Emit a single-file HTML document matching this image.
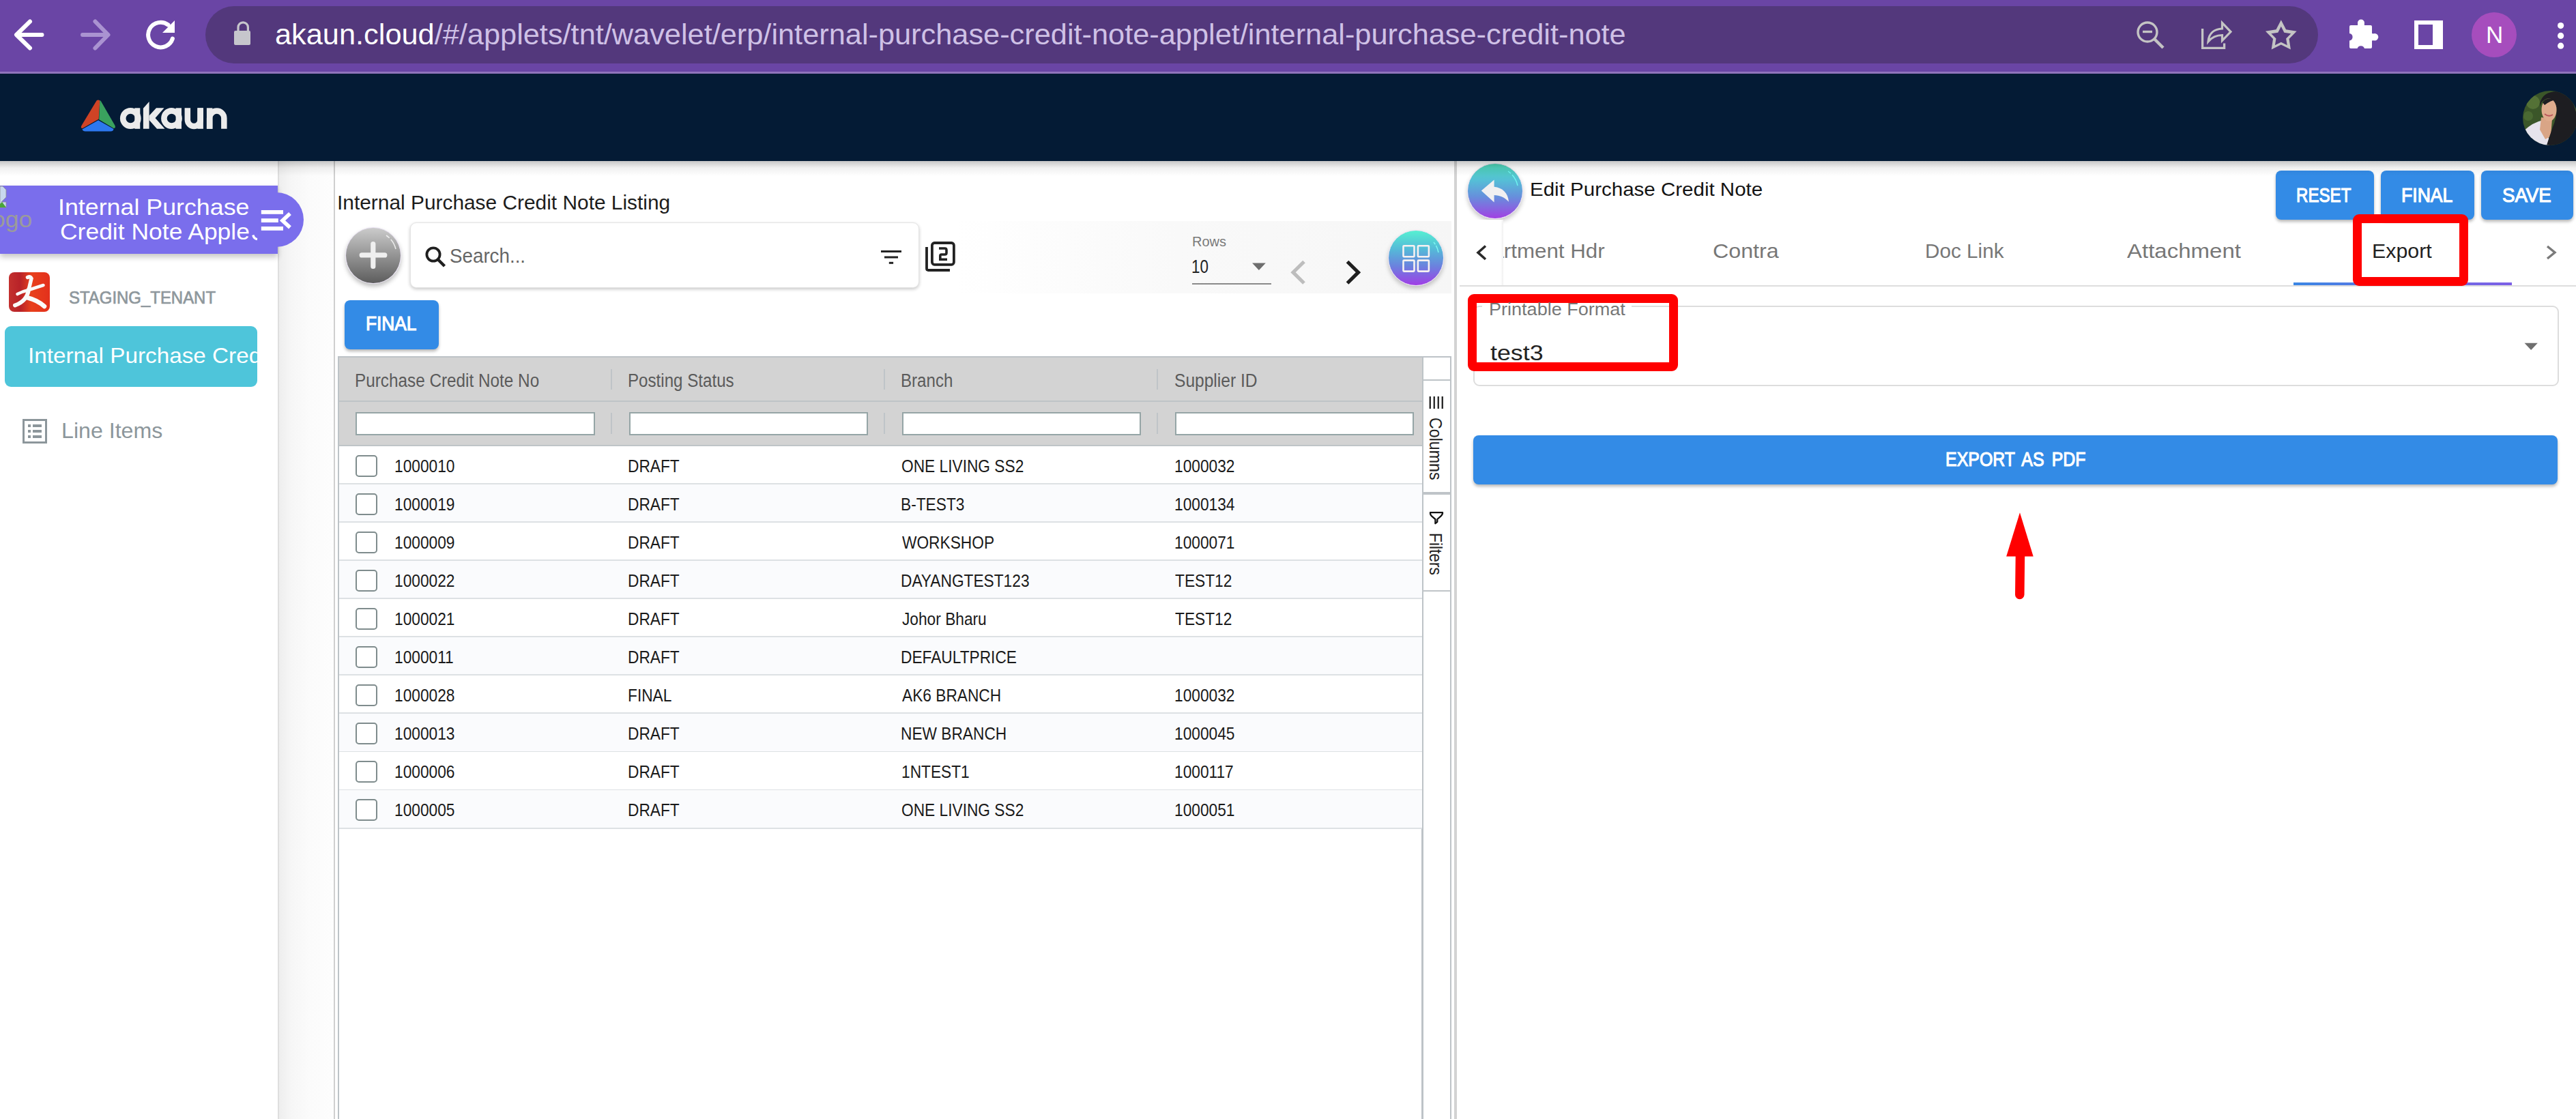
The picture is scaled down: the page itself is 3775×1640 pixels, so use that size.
<!DOCTYPE html>
<html><head><meta charset="utf-8">
<style>
html,body{margin:0;padding:0;}
body{width:3775px;height:1640px;overflow:hidden;position:relative;background:#fff;font-family:"Liberation Sans",sans-serif;}
.a{position:absolute;box-sizing:border-box;}
.t{position:absolute;white-space:nowrap;line-height:1;transform-origin:0 0;font-family:"Liberation Sans",sans-serif;}
svg{position:absolute;overflow:visible;}
</style></head>
<body>
<!-- ===== browser chrome ===== -->
<div class="a" style="left:0;top:0;width:3775px;height:105px;background:#6a45a5;"></div>
<div class="a" style="left:0;top:105px;width:3775px;height:3px;background:#9074bc;"></div>
<div class="a" style="left:301px;top:9px;width:3096px;height:84px;border-radius:42px;background:#53387c;"></div>

<!-- browser icons -->
<svg style="left:0;top:0" width="3775" height="105" viewBox="0 0 3775 105">
  <!-- back -->
  <g fill="none" stroke="#ffffff" stroke-width="6" stroke-linecap="round" stroke-linejoin="round">
    <path d="M61.5,51 H24.5 M44,31.5 L24,51 L44,70.5"/>
  </g>
  <!-- forward -->
  <g fill="none" stroke="#aa93d1" stroke-width="6" stroke-linecap="round" stroke-linejoin="round">
    <path d="M121,51 H157.5 M139.5,31.5 L158.5,51 L139.5,70.5"/>
  </g>
  <!-- reload -->
  <g fill="none" stroke="#ffffff" stroke-width="6" stroke-linecap="round">
    <path d="M252.9,56.5 A18.3,18.3 0 1 1 246.5,36.5"/>
  </g>
  <path d="M256,30 V48 H238 Z" fill="#ffffff"/>
  <!-- lock -->
  <path d="M349,45 V40 A7.2,7.2 0 0 1 363.4,40 V45" fill="none" stroke="#c6c6cc" stroke-width="3.2"/>
  <rect x="343" y="45" width="24" height="21" rx="2" fill="#c6c6cc"/>
  <!-- zoom out -->
  <circle cx="3147" cy="47" r="14" fill="none" stroke="#c4c4c4" stroke-width="3.4"/>
  <path d="M3140,46.5 H3154" stroke="#c4c4c4" stroke-width="3.4"/>
  <path d="M3157,57 L3170,70" stroke="#c4c4c4" stroke-width="4.4"/>
  <!-- share -->
  <path d="M3227.6,42 V70.4 H3259.6 V63.4" fill="none" stroke="#c4c4c4" stroke-width="3.3"/>
  <path d="M3236,61 C3237,48 3246,42.5 3256.5,42 V33.5 L3269,46.6 L3256.5,59.5 V51.5 C3248,51.5 3241,55 3236,61 Z" fill="none" stroke="#c4c4c4" stroke-width="3.2" stroke-linejoin="miter"/>
  <!-- star -->
  <path d="M3342.80,29.20 L3350.09,43.17 L3365.63,45.78 L3354.59,57.03 L3356.91,72.62 L3342.80,65.60 L3328.69,72.62 L3331.01,57.03 L3319.97,45.78 L3335.51,43.17 Z M3342.80,38.80 L3347.33,47.77 L3357.26,49.30 L3350.12,56.38 L3351.73,66.30 L3342.80,61.70 L3333.87,66.30 L3335.48,56.38 L3328.34,49.30 L3338.27,47.77 Z" fill="#c4c4c4" fill-rule="evenodd"/>
  <!-- puzzle -->
  <path d="M3448,37 H3455 A5,5 0 0 1 3465,37 H3474 A2,2 0 0 1 3476,39 V49 A5.3,5.3 0 0 1 3476,59.6 V69 A2,2 0 0 1 3474,71 H3465 A5.5,5.5 0 0 0 3454.5,71 H3445 A2,2 0 0 1 3443,69 V59.5 A5.3,5.3 0 0 0 3443,49 V39 A2,2 0 0 1 3445,37 Z" fill="#ffffff"/>
  <circle cx="3460" cy="33.5" r="5" fill="#ffffff"/>
  <circle cx="3480" cy="54.3" r="5.3" fill="#ffffff"/>
  <!-- sidebar toggle -->
  <path d="M3538,30 H3580 V72 H3538 Z M3544,36 V66 H3565 V36 Z" fill="#ffffff" fill-rule="evenodd"/>
  <!-- profile N -->
  <circle cx="3655" cy="51" r="33" fill="#a64dbd"/>
  <!-- menu dots -->
  <circle cx="3752.6" cy="37.6" r="4.6" fill="#fff"/>
  <circle cx="3752.6" cy="52.4" r="4.6" fill="#fff"/>
  <circle cx="3752.6" cy="67.2" r="4.6" fill="#fff"/>
</svg>

<!-- ===== navy app header ===== -->
<div class="a" style="left:0;top:108px;width:3775px;height:128px;background:#041b35;"></div>
<svg style="left:0;top:108px" width="3775" height="128" viewBox="0 108 3775 128">
  <!-- akaun logo triangle -->
  <path d="M141.5,147.5 Q143.9,145.5 146.3,147.5 L144.7,174.6 L121,188 Q117.5,188 119.5,184 Z" fill="#cf4325"/>
  <path d="M146.3,147.5 Q146.8,146.8 148,148.6 L168.5,184 Q170,188 166.5,188 L145.2,175.2 Z" fill="#3aa15e"/>
  <path d="M144,176.3 L166.5,189 Q166,192.5 162,192.5 H125 Q121.5,192.5 120.5,189.5 Z" fill="#2d78ef"/>
  <!-- akaun letters -->
  <g fill="#ebebeb">
    <circle cx="191.3" cy="173.5" r="11.1" fill="none" stroke="#ebebeb" stroke-width="8.6"/>
    <rect x="197.3" y="158.3" width="8" height="30.5"/>
    <path d="M209.9,158.7 L218.6,149.1 V188.8 H209.9 Z"/>
    <path d="M218.6,169.5 L229,158.3 H240.5 L227.5,173 L241.5,188.8 H230 L218.6,176 Z"/>
    <circle cx="251.5" cy="173.5" r="11.1" fill="none" stroke="#ebebeb" stroke-width="8.6"/>
    <rect x="257.6" y="158.3" width="8.4" height="30.5"/>
    <path d="M274.85,158.3 V175.5 A9.4,9.4 0 0 0 293.65,175.5 V158.3" fill="none" stroke="#ebebeb" stroke-width="8.5"/>
    <rect x="289.4" y="158.3" width="8.5" height="30.5"/>
    <rect x="302.9" y="158.3" width="8.5" height="30.5"/>
    <path d="M307.15,188.8 V173.2 A10.6,10.6 0 0 1 328.35,173.2 V188.8" fill="none" stroke="#ebebeb" stroke-width="8.5"/>
  </g>
  <!-- avatar -->
  <defs>
    <clipPath id="avc"><circle cx="3737" cy="173" r="40"/></clipPath>
    <radialGradient id="avbg" cx="0.3" cy="0.3" r="0.9">
      <stop offset="0" stop-color="#4f6a2e"/><stop offset="0.6" stop-color="#2a3a1c"/><stop offset="1" stop-color="#1a2414"/>
    </radialGradient>
  </defs>
  <g clip-path="url(#avc)">
    <rect x="3690" y="128" width="90" height="90" fill="#3b5629"/>
    <circle cx="3712" cy="150" r="10" fill="#5f7d3c" opacity="0.7"/>
    <circle cx="3705" cy="170" r="7" fill="#4f6e34" opacity="0.8"/>
    <circle cx="3768" cy="160" r="8" fill="#5a7a3a" opacity="0.6"/>
    <path d="M3698,192 Q3712,179 3727,176 L3734,196 L3737,215 L3698,215 Z" fill="#e6e3ec"/>
    <path d="M3724,172 L3740,174 L3738,200 L3730,204 L3722,190 Z" fill="#d9a586"/>
    <path d="M3722,152 Q3726,133 3750,134 Q3772,140 3776,170 L3777,216 L3731,216 Q3736,200 3741,186 Q3747,172 3746.5,158 Q3744,146 3733,144 Q3724,147 3722,156 Z" fill="#1d1d21"/>
    <ellipse cx="3735.5" cy="161" rx="11" ry="16.5" fill="#dfab8d"/>
    <path d="M3726,150 Q3732,141 3746,146 Q3738,147 3729,154 Z" fill="#1d1d21"/>
    <path d="M3729,167 Q3735,172 3741,168" fill="none" stroke="#b9565a" stroke-width="1.8"/>
  </g>
</svg>

<!-- ===== panels ===== -->
<div class="a" style="left:407px;top:236px;width:2px;height:1404px;background:#dedede;"></div>
<div class="a" style="left:409px;top:236px;width:80px;height:1404px;background:linear-gradient(to right,#eeeeee,#f6f6f6 22%,#fbfbfb 55%,#fdfdfd);"></div>
<div class="a" style="left:489px;top:236px;width:2px;height:1404px;background:#cfcfcf;"></div>
<div class="a" style="left:2131px;top:236px;width:4px;height:1404px;background:#d3d3d3;"></div>

<!-- ===== sidebar ===== -->
<div class="a" style="left:0;top:272px;width:407px;height:100px;background:#7a6eec;box-shadow:0 5px 8px rgba(0,0,0,0.22);"></div>
<div class="a" style="left:365px;top:282px;width:80px;height:80px;border-radius:40px;background:#7a6eec;"></div>
<div class="a" style="left:0;top:272px;width:407px;height:100px;background:#7a6eec;"></div>
<svg style="left:0;top:260px" width="460" height="120" viewBox="0 260 460 120">
  <!-- broken image icon -->
  <path d="M0,273 H4 L9,278 V289 L2,296 L9,296 V304 H0 Z" fill="#c9d8ee" stroke="#8e8e8e" stroke-width="0.8"/>
  <path d="M0,299 L3,296 L9,304 H0 Z" fill="#4aa53a"/>
  <path d="M370.8,344.5 Q372.3,350 377,350.6" fill="none" stroke="#fff" stroke-width="3.4"/>
  <!-- hamburger -->
  <g fill="#ffffff">
    <rect x="382.8" y="308" width="32.2" height="5.8"/>
    <rect x="382.8" y="320.2" width="25" height="5.8"/>
    <rect x="382.8" y="332" width="32.2" height="5.8"/>
  </g>
  <path d="M425,313 L414,323.2 L425,333.4" fill="none" stroke="#ffffff" stroke-width="5.6"/>
</svg>
<!-- tenant logo -->
<div class="a" style="left:13px;top:399px;width:60px;height:57.5px;border-radius:8px;background:linear-gradient(to right,#c3302e,#b82228 28%,#e8401c 55%,#e3301c);"></div>
<svg style="left:13px;top:399px" width="60" height="58" viewBox="13 399 60 58">
  <g fill="none" stroke="#fafafa" stroke-linecap="round">
    <path d="M40.5,406.5 Q44.5,404.5 46,408 L42.5,423" stroke-width="5.5"/>
    <path d="M25.5,431 Q33,427 42,425 Q54,421 63.5,418" stroke-width="4.6"/>
    <path d="M42,424 Q40,441 22,447.5" stroke-width="6"/>
    <path d="M41,436.5 Q55,440 65,449" stroke-width="6.5"/>
  </g>
</svg>
<!-- sidebar active item -->
<div class="a" style="left:7px;top:477.5px;width:370px;height:89px;border-radius:9px;background:#4ec5da;"></div>
<!-- line items icon -->
<svg style="left:30px;top:610px" width="45" height="45" viewBox="30 610 45 45">
  <rect x="34.5" y="615.5" width="33" height="33" fill="none" stroke="#8c969b" stroke-width="3"/>
  <g fill="#8c969b">
    <rect x="41" y="622" width="4" height="4"/><rect x="48" y="622" width="13" height="4"/>
    <rect x="41" y="630" width="4" height="4"/><rect x="48" y="630" width="13" height="4"/>
    <rect x="41" y="638" width="4" height="4"/><rect x="48" y="638" width="13" height="4"/>
  </g>
</svg>

<!-- ===== listing panel ===== -->
<!-- pagination band -->
<div class="a" style="left:1400px;top:324px;width:727px;height:106px;background:linear-gradient(to right,rgba(248,248,248,0),#f9f9f9 45%,#f6f6f6);"></div>
<!-- add button -->
<div class="a" style="left:506px;top:332.5px;width:82px;height:83px;border-radius:50%;background:linear-gradient(to bottom,#cbcbcb,#5d5d5d);border:1.6px solid #e9e2f2;box-shadow:0 4px 6px rgba(0,0,0,0.25);"></div>
<svg style="left:500px;top:325px" width="100" height="100" viewBox="500 325 100 100">
  <path d="M546.8,357.5 V390.5 M530.2,373.9 H563.8" stroke="#efefef" stroke-width="7.2" stroke-linecap="round"/>
  <path d="M566,345 A33,33 0 0 1 580,365" fill="none" stroke="rgba(255,255,255,0.75)" stroke-width="1.6" stroke-dasharray="6 3 40"/>
</svg>
<!-- search box -->
<div class="a" style="left:601px;top:326px;width:746px;height:96px;border-radius:9px;background:#fff;border:1px solid #e4e4e4;box-shadow:0 2px 5px rgba(0,0,0,0.22);"></div>
<svg style="left:600px;top:325px" width="820" height="100" viewBox="600 325 820 100">
  <circle cx="635" cy="373" r="9.6" fill="none" stroke="#1f1f1f" stroke-width="3.8"/>
  <path d="M641.5,380 L651.5,390" stroke="#1f1f1f" stroke-width="4.4"/>
  <g fill="#222">
    <rect x="1291" y="367" width="30" height="3"/>
    <rect x="1296" y="375.5" width="20" height="3"/>
    <rect x="1302.8" y="383.8" width="6.3" height="3"/>
  </g>
  <!-- library icon -->
  <rect x="1365.9" y="356" width="32" height="31.8" rx="3.5" fill="none" stroke="#222" stroke-width="3.8"/>
  <path d="M1358,362 V393.5 Q1358,396 1360.5,396 H1392" fill="none" stroke="#222" stroke-width="3.8"/>
  <path d="M1376,364 H1384.5 Q1387,364 1387,366.5 V370.5 Q1387,373 1384.5,373 H1379.5 Q1377.8,373 1377.8,375 V380.2 H1388" fill="none" stroke="#222" stroke-width="3.6"/>
</svg>
<!-- rows selector -->
<div class="a" style="left:1747px;top:415px;width:116px;height:2px;background:#8a8a8a;"></div>
<svg style="left:1820px;top:370px" width="320" height="60" viewBox="1820 370 320 60">
  <path d="M1835,385.4 H1854.8 L1844.9,396 Z" fill="#6e6e6e"/>
  <path d="M1911,383.5 L1895,399.2 L1911,415" fill="none" stroke="#bdbdbd" stroke-width="5.2"/>
  <path d="M1974.5,383.5 L1990.5,399.2 L1974.5,415" fill="none" stroke="#1f1f1f" stroke-width="5.2"/>
</svg>
<!-- grid button -->
<div class="a" style="left:2034px;top:337px;width:82px;height:82px;border-radius:50%;background:linear-gradient(to bottom,#56f0d2,#55b8d8 35%,#6b82de 65%,#a03ee6);border:1.6px solid #ece3f3;box-shadow:0 4px 6px rgba(0,0,0,0.22);"></div>
<svg style="left:2030px;top:330px" width="95" height="95" viewBox="2030 330 95 95">
  <g fill="none" stroke="#f6f1f1" stroke-width="2.6">
    <rect x="2056.5" y="360.3" width="16" height="16" rx="1"/>
    <rect x="2077.9" y="360.3" width="16" height="16" rx="1"/>
    <rect x="2056.5" y="381.6" width="16" height="16" rx="1"/>
    <rect x="2077.9" y="381.6" width="16" height="16" rx="1"/>
  </g>
  <path d="M2101,355 A33,33 0 0 1 2108,370" fill="none" stroke="#7ff5f0" stroke-width="1.5" stroke-dasharray="4 2 30"/>
</svg>
<!-- FINAL button -->
<div class="a" style="left:505px;top:440px;width:138px;height:72px;border-radius:8px;background:#338be6;box-shadow:0 3px 4px rgba(0,0,0,0.28);"></div>

<!-- ===== table ===== -->
<div class="a" style="left:495px;top:522px;width:1590px;height:1118px;border-left:2px solid #bdc3c7;border-top:2px solid #bdc3c7;border-right:2px solid #bdc3c7;"></div>
<div class="a" style="left:497px;top:524px;width:1587px;height:128.5px;background:#d3d3d3;"></div>
<div class="a" style="left:497px;top:587px;width:1587px;height:2px;background:#bfc4c7;"></div>
<div class="a" style="left:497px;top:651.5px;width:1587px;height:2px;background:#bfc4c7;"></div>
<div class="a" style="left:497px;top:653.50px;width:1587px;height:56.07px;background:#ffffff;"></div>
<div class="a" style="left:497px;top:708.07px;width:1587px;height:2px;background:#dde1e4;"></div>
<div class="a" style="left:521px;top:666.50px;width:32px;height:32px;border:2px solid #7f8c8d;border-radius:5px;background:#fff;"></div>
<div class="a" style="left:497px;top:709.57px;width:1587px;height:56.07px;background:#fafbfd;"></div>
<div class="a" style="left:497px;top:764.14px;width:1587px;height:2px;background:#dde1e4;"></div>
<div class="a" style="left:521px;top:722.57px;width:32px;height:32px;border:2px solid #7f8c8d;border-radius:5px;background:#fff;"></div>
<div class="a" style="left:497px;top:765.64px;width:1587px;height:56.07px;background:#ffffff;"></div>
<div class="a" style="left:497px;top:820.21px;width:1587px;height:2px;background:#dde1e4;"></div>
<div class="a" style="left:521px;top:778.64px;width:32px;height:32px;border:2px solid #7f8c8d;border-radius:5px;background:#fff;"></div>
<div class="a" style="left:497px;top:821.71px;width:1587px;height:56.07px;background:#fafbfd;"></div>
<div class="a" style="left:497px;top:876.28px;width:1587px;height:2px;background:#dde1e4;"></div>
<div class="a" style="left:521px;top:834.71px;width:32px;height:32px;border:2px solid #7f8c8d;border-radius:5px;background:#fff;"></div>
<div class="a" style="left:497px;top:877.78px;width:1587px;height:56.07px;background:#ffffff;"></div>
<div class="a" style="left:497px;top:932.35px;width:1587px;height:2px;background:#dde1e4;"></div>
<div class="a" style="left:521px;top:890.78px;width:32px;height:32px;border:2px solid #7f8c8d;border-radius:5px;background:#fff;"></div>
<div class="a" style="left:497px;top:933.85px;width:1587px;height:56.07px;background:#fafbfd;"></div>
<div class="a" style="left:497px;top:988.42px;width:1587px;height:2px;background:#dde1e4;"></div>
<div class="a" style="left:521px;top:946.85px;width:32px;height:32px;border:2px solid #7f8c8d;border-radius:5px;background:#fff;"></div>
<div class="a" style="left:497px;top:989.92px;width:1587px;height:56.07px;background:#ffffff;"></div>
<div class="a" style="left:497px;top:1044.49px;width:1587px;height:2px;background:#dde1e4;"></div>
<div class="a" style="left:521px;top:1002.92px;width:32px;height:32px;border:2px solid #7f8c8d;border-radius:5px;background:#fff;"></div>
<div class="a" style="left:497px;top:1045.99px;width:1587px;height:56.07px;background:#fafbfd;"></div>
<div class="a" style="left:497px;top:1100.56px;width:1587px;height:2px;background:#dde1e4;"></div>
<div class="a" style="left:521px;top:1058.99px;width:32px;height:32px;border:2px solid #7f8c8d;border-radius:5px;background:#fff;"></div>
<div class="a" style="left:497px;top:1102.06px;width:1587px;height:56.07px;background:#ffffff;"></div>
<div class="a" style="left:497px;top:1156.63px;width:1587px;height:2px;background:#dde1e4;"></div>
<div class="a" style="left:521px;top:1115.06px;width:32px;height:32px;border:2px solid #7f8c8d;border-radius:5px;background:#fff;"></div>
<div class="a" style="left:497px;top:1158.13px;width:1587px;height:56.07px;background:#fafbfd;"></div>
<div class="a" style="left:497px;top:1212.70px;width:1587px;height:2px;background:#dde1e4;"></div>
<div class="a" style="left:521px;top:1171.13px;width:32px;height:32px;border:2px solid #7f8c8d;border-radius:5px;background:#fff;"></div>
<div class="a" style="left:894.8px;top:541px;width:2px;height:30px;background:#bfc4c8;"></div>
<div class="a" style="left:894.8px;top:604.5px;width:2px;height:31px;background:#bfc4c8;"></div>
<div class="a" style="left:1294.5px;top:541px;width:2px;height:30px;background:#bfc4c8;"></div>
<div class="a" style="left:1294.5px;top:604.5px;width:2px;height:31px;background:#bfc4c8;"></div>
<div class="a" style="left:1694.6px;top:541px;width:2px;height:30px;background:#bfc4c8;"></div>
<div class="a" style="left:1694.6px;top:604.5px;width:2px;height:31px;background:#bfc4c8;"></div>
<div class="a" style="left:521.4px;top:604px;width:350.9px;height:34px;border:2px solid #95a5a6;background:#fff;"></div>
<div class="a" style="left:921.5px;top:604px;width:350.9px;height:34px;border:2px solid #95a5a6;background:#fff;"></div>
<div class="a" style="left:1321.5px;top:604px;width:350.8px;height:34px;border:2px solid #95a5a6;background:#fff;"></div>
<div class="a" style="left:1721.7px;top:604px;width:350.5px;height:34px;border:2px solid #95a5a6;background:#fff;"></div>
<!-- tool panel -->
<div class="a" style="left:2084px;top:522px;width:43px;height:1118px;background:#fff;border-top:2px solid #bdc3c7;border-right:2px solid #bdc3c7;border-left:2px solid #bdc3c7;"></div>
<div class="a" style="left:2084px;top:556px;width:43px;height:2px;background:#bdc3c7;"></div>
<div class="a" style="left:2084px;top:721px;width:43px;height:3.5px;background:#bfc4c8;"></div>
<div class="a" style="left:2084px;top:865px;width:43px;height:2px;background:#bfc4c8;"></div>
<svg style="left:2084px;top:570px" width="43" height="210" viewBox="2084 570 43 210">
  <g fill="#222">
    <rect x="2094.6" y="581" width="2.3" height="18"/>
    <rect x="2100.6" y="581" width="2.3" height="18"/>
    <rect x="2106.6" y="581" width="2.3" height="18"/>
    <rect x="2112.6" y="581" width="2.3" height="18"/>
  </g>
  <path d="M2096,751.2 H2114 V752.6 Q2113.6,754.6 2111.6,756.4 L2106.3,761 V764.8 L2103.4,767.2 V761 L2098,756.4 Q2096,754.6 2096,752.6 Z" fill="none" stroke="#111" stroke-width="2.3" stroke-linejoin="round"/>
</svg>

<!-- ===== right panel ===== -->
<div class="a" style="left:2150px;top:239px;width:82px;height:82px;border-radius:50%;background:linear-gradient(to bottom,#4dd6b5,#55bfd6 30%,#6690dc 60%,#a141e3);border:1.6px solid #ece3f3;box-shadow:0 4px 6px rgba(0,0,0,0.22);"></div>
<svg style="left:2140px;top:230px" width="100" height="100" viewBox="2140 230 100 100">
  <path d="M2170.8,279.6 L2189.6,263.5 L2189.6,273.8 C2202,275 2210,283 2211,295.7 C2205,289 2198,286 2189.6,285.9 L2189.6,296.6 Z" fill="#f1f0f1"/>
  <path d="M2210,251 A34,34 0 0 1 2224,272" fill="none" stroke="#6ff4ef" stroke-width="1.5" stroke-dasharray="5 3 40"/>
</svg>
<!-- action buttons -->
<div class="a" style="left:3335px;top:250px;width:144px;height:72px;border-radius:8px;background:#338be6;box-shadow:0 3px 4px rgba(0,0,0,0.28);"></div>
<div class="a" style="left:3489px;top:250px;width:137px;height:72px;border-radius:8px;background:#338be6;box-shadow:0 3px 4px rgba(0,0,0,0.28);"></div>
<div class="a" style="left:3636px;top:250px;width:135px;height:72px;border-radius:8px;background:#338be6;box-shadow:0 3px 4px rgba(0,0,0,0.28);"></div>
<!-- tabs -->
<div class="a" style="left:2139px;top:418px;width:3636px;height:2px;background:#dedede;"></div>
<div class="a" style="left:3360.6px;top:413.6px;width:320px;height:4.4px;background:linear-gradient(to right,#3a86e4,#6b6fe4 60%,#7c5fe6);"></div>
<div class="a" style="left:2135px;top:322px;width:68px;height:96px;background:linear-gradient(to right,#fff 94%,#f0f0f0);"></div>
<svg style="left:2135px;top:340px" width="1640" height="60" viewBox="2135 340 1640 60">
  <path d="M2177,360.5 L2166,370.2 L2177,380" fill="none" stroke="#2a2a2a" stroke-width="3.6"/>
  <path d="M3733,361 L3744,370 L3733,379" fill="none" stroke="#7a7a7a" stroke-width="3.4"/>
</svg>
<!-- printable format field -->
<div class="a" style="left:2159px;top:448px;width:1591px;height:118px;border:2px solid #dddddd;border-radius:9px;"></div>
<div class="a" style="left:2172px;top:440px;width:219px;height:14px;background:#fff;"></div>
<svg style="left:3690px;top:495px" width="40" height="25" viewBox="3690 495 40 25">
  <path d="M3699.5,502.8 H3718.8 L3709.15,513 Z" fill="#6f6f6f"/>
</svg>
<!-- export as pdf -->
<div class="a" style="left:2159px;top:638px;width:1589px;height:72px;border-radius:8px;background:#338be6;box-shadow:0 3px 4px rgba(0,0,0,0.28);"></div>
<!-- red arrow -->
<svg style="left:2930px;top:745px" width="60" height="140" viewBox="2930 745 60 140">
  <path d="M2960,751.2 L2979.7,815.5 L2940.2,815.5 Z" fill="#ff0000"/>
  <path d="M2960.5,812 L2959.8,871.5" stroke="#ff0000" stroke-width="13.5" stroke-linecap="round"/>
</svg>
<!-- red highlight boxes -->
<div class="a" style="left:3448px;top:313.5px;width:169px;height:105px;border:13px solid #ff0000;border-radius:9px;"></div>
<div class="a" style="left:2151px;top:431px;width:308px;height:113px;border:13.3px solid #ff0000;border-radius:9px;"></div>

<!-- header shadow -->
<div class="a" style="left:0;top:236px;width:3775px;height:22px;background:linear-gradient(to bottom,rgba(0,0,0,0.22),rgba(0,0,0,0.06) 45%,rgba(0,0,0,0));"></div>

<div class="t" style="left:403.29px;top:29.40px;font-size:43.00px;color:#cfc1e6;transform:scaleX(1.0076);"><span style="color:#ffffff">akaun.cloud</span>/#/applets/tnt/wavelet/erp/internal-purchase-credit-note-applet/internal-purchase-credit-note</div>
<div class="t" style="left:3642.63px;top:33.65px;font-size:35.50px;color:#ffffff;transform:scaleX(0.9857);">N</div>
<div class="t" style="left:-19.62px;top:304.87px;font-size:33.00px;color:#9b9b9b;transform:scaleX(1.0800);">logo</div>
<div class="t" style="left:85.37px;top:287.22px;font-size:33.28px;color:#ffffff;transform:scaleX(1.0757);">Internal Purchase</div>
<div class="t" style="left:87.53px;top:322.92px;font-size:33.28px;color:#ffffff;transform:scaleX(1.0660);">Credit Note Apple</div>
<div class="t" style="left:100.94px;top:423.94px;font-size:25.00px;color:#8e979c;-webkit-text-stroke:0.7px #8e979c;transform:scaleX(0.9575);">STAGING_TENANT</div>
<div style="position:absolute;overflow:hidden;left:0.00px;top:471.70px;width:377.00px;height:80px;"><div class="t" style="left:40.92px;top:32.93px;font-size:31.98px;color:#ffffff;transform:scaleX(1.0408);">Internal Purchase Credit</div></div>
<div class="t" style="left:89.69px;top:614.93px;font-size:31.98px;color:#8c969b;transform:scaleX(1.0056);">Line Items</div>
<div class="t" style="left:493.74px;top:283.39px;font-size:29.07px;color:#1c1c1c;transform:scaleX(1.0280);">Internal Purchase Credit Note Listing</div>
<div class="t" style="left:659.07px;top:359.78px;font-size:29.80px;color:#666666;transform:scaleX(0.9313);">Search...</div>
<div class="t" style="left:535.69px;top:460.39px;font-size:29.07px;color:#ffffff;-webkit-text-stroke:1.2px #fff;transform:scaleX(0.9040);">FINAL</div>
<div class="t" style="left:1746.62px;top:344.07px;font-size:20.35px;color:#7a7a7a;transform:scaleX(0.9819);">Rows</div>
<div class="t" style="left:1745.98px;top:376.62px;font-size:27.62px;color:#222222;transform:scaleX(0.8111);">10</div>
<div class="t" style="left:519.94px;top:543.62px;font-size:27.62px;color:#5b5b5b;transform:scaleX(0.8803);">Purchase Credit Note No</div>
<div class="t" style="left:920.05px;top:543.62px;font-size:27.62px;color:#5b5b5b;transform:scaleX(0.8743);">Posting Status</div>
<div class="t" style="left:1319.95px;top:543.62px;font-size:27.62px;color:#5b5b5b;transform:scaleX(0.8737);">Branch</div>
<div class="t" style="left:1720.81px;top:543.62px;font-size:27.62px;color:#5b5b5b;transform:scaleX(0.8898);">Supplier ID</div>
<div class="t" style="left:578.00px;top:670.69px;font-size:25.29px;color:#1a1a1a;transform:scaleX(0.8985);">1000010</div>
<div class="t" style="left:920.00px;top:670.69px;font-size:25.29px;color:#1a1a1a;transform:scaleX(0.8985);">DRAFT</div>
<div class="t" style="left:1320.80px;top:670.69px;font-size:25.29px;color:#1a1a1a;transform:scaleX(0.8985);">ONE LIVING SS2</div>
<div class="t" style="left:1720.80px;top:670.69px;font-size:25.29px;color:#1a1a1a;transform:scaleX(0.8985);">1000032</div>
<div class="t" style="left:578.00px;top:726.76px;font-size:25.29px;color:#1a1a1a;transform:scaleX(0.8985);">1000019</div>
<div class="t" style="left:920.00px;top:726.76px;font-size:25.29px;color:#1a1a1a;transform:scaleX(0.8985);">DRAFT</div>
<div class="t" style="left:1319.90px;top:726.76px;font-size:25.29px;color:#1a1a1a;transform:scaleX(0.8985);">B-TEST3</div>
<div class="t" style="left:1720.80px;top:726.76px;font-size:25.29px;color:#1a1a1a;transform:scaleX(0.8985);">1000134</div>
<div class="t" style="left:578.00px;top:782.83px;font-size:25.29px;color:#1a1a1a;transform:scaleX(0.8985);">1000009</div>
<div class="t" style="left:920.00px;top:782.83px;font-size:25.29px;color:#1a1a1a;transform:scaleX(0.8985);">DRAFT</div>
<div class="t" style="left:1321.70px;top:782.83px;font-size:25.29px;color:#1a1a1a;transform:scaleX(0.8985);">WORKSHOP</div>
<div class="t" style="left:1720.80px;top:782.83px;font-size:25.29px;color:#1a1a1a;transform:scaleX(0.8985);">1000071</div>
<div class="t" style="left:578.00px;top:838.90px;font-size:25.29px;color:#1a1a1a;transform:scaleX(0.8985);">1000022</div>
<div class="t" style="left:920.00px;top:838.90px;font-size:25.29px;color:#1a1a1a;transform:scaleX(0.8985);">DRAFT</div>
<div class="t" style="left:1319.90px;top:838.90px;font-size:25.29px;color:#1a1a1a;transform:scaleX(0.8985);">DAYANGTEST123</div>
<div class="t" style="left:1721.70px;top:838.90px;font-size:25.29px;color:#1a1a1a;transform:scaleX(0.8985);">TEST12</div>
<div class="t" style="left:578.00px;top:894.97px;font-size:25.29px;color:#1a1a1a;transform:scaleX(0.8985);">1000021</div>
<div class="t" style="left:920.00px;top:894.97px;font-size:25.29px;color:#1a1a1a;transform:scaleX(0.8985);">DRAFT</div>
<div class="t" style="left:1321.70px;top:894.97px;font-size:25.29px;color:#1a1a1a;transform:scaleX(0.8985);">Johor Bharu</div>
<div class="t" style="left:1721.70px;top:894.97px;font-size:25.29px;color:#1a1a1a;transform:scaleX(0.8985);">TEST12</div>
<div class="t" style="left:578.00px;top:951.04px;font-size:25.29px;color:#1a1a1a;transform:scaleX(0.8985);">1000011</div>
<div class="t" style="left:920.00px;top:951.04px;font-size:25.29px;color:#1a1a1a;transform:scaleX(0.8985);">DRAFT</div>
<div class="t" style="left:1319.90px;top:951.04px;font-size:25.29px;color:#1a1a1a;transform:scaleX(0.8985);">DEFAULTPRICE</div>
<div class="t" style="left:578.00px;top:1007.11px;font-size:25.29px;color:#1a1a1a;transform:scaleX(0.8985);">1000028</div>
<div class="t" style="left:920.00px;top:1007.11px;font-size:25.29px;color:#1a1a1a;transform:scaleX(0.8985);">FINAL</div>
<div class="t" style="left:1321.70px;top:1007.11px;font-size:25.29px;color:#1a1a1a;transform:scaleX(0.8985);">AK6 BRANCH</div>
<div class="t" style="left:1720.80px;top:1007.11px;font-size:25.29px;color:#1a1a1a;transform:scaleX(0.8985);">1000032</div>
<div class="t" style="left:578.00px;top:1063.18px;font-size:25.29px;color:#1a1a1a;transform:scaleX(0.8985);">1000013</div>
<div class="t" style="left:920.00px;top:1063.18px;font-size:25.29px;color:#1a1a1a;transform:scaleX(0.8985);">DRAFT</div>
<div class="t" style="left:1319.90px;top:1063.18px;font-size:25.29px;color:#1a1a1a;transform:scaleX(0.8985);">NEW BRANCH</div>
<div class="t" style="left:1720.80px;top:1063.18px;font-size:25.29px;color:#1a1a1a;transform:scaleX(0.8985);">1000045</div>
<div class="t" style="left:578.00px;top:1119.25px;font-size:25.29px;color:#1a1a1a;transform:scaleX(0.8985);">1000006</div>
<div class="t" style="left:920.00px;top:1119.25px;font-size:25.29px;color:#1a1a1a;transform:scaleX(0.8985);">DRAFT</div>
<div class="t" style="left:1320.80px;top:1119.25px;font-size:25.29px;color:#1a1a1a;transform:scaleX(0.8985);">1NTEST1</div>
<div class="t" style="left:1720.80px;top:1119.25px;font-size:25.29px;color:#1a1a1a;transform:scaleX(0.8985);">1000117</div>
<div class="t" style="left:578.00px;top:1175.32px;font-size:25.29px;color:#1a1a1a;transform:scaleX(0.8985);">1000005</div>
<div class="t" style="left:920.00px;top:1175.32px;font-size:25.29px;color:#1a1a1a;transform:scaleX(0.8985);">DRAFT</div>
<div class="t" style="left:1320.80px;top:1175.32px;font-size:25.29px;color:#1a1a1a;transform:scaleX(0.8985);">ONE LIVING SS2</div>
<div class="t" style="left:1720.80px;top:1175.32px;font-size:25.29px;color:#1a1a1a;transform:scaleX(0.8985);">1000051</div>
<div class="t" style="left:2241.89px;top:264.38px;font-size:27.91px;color:#141414;transform:scaleX(1.0575);">Edit Purchase Credit Note</div>
<div class="t" style="left:3365.26px;top:270.65px;font-size:29.36px;color:#ffffff;-webkit-text-stroke:1.2px #fff;transform:scaleX(0.8213);">RESET</div>
<div class="t" style="left:3519.19px;top:270.65px;font-size:29.36px;color:#ffffff;-webkit-text-stroke:1.2px #fff;transform:scaleX(0.9063);">FINAL</div>
<div class="t" style="left:3667.06px;top:270.65px;font-size:29.36px;color:#ffffff;-webkit-text-stroke:1.2px #fff;transform:scaleX(0.9428);">SAVE</div>
<div style="position:absolute;overflow:hidden;left:2203.00px;top:319.00px;width:197.00px;height:80px;"><div class="t" style="left:-73.76px;top:35.39px;font-size:29.07px;color:#777777;transform:scaleX(1.0772);">Department Hdr</div></div>
<div class="t" style="left:2510.09px;top:354.39px;font-size:29.07px;color:#777777;transform:scaleX(1.1072);">Contra</div>
<div class="t" style="left:2820.96px;top:354.39px;font-size:29.07px;color:#777777;transform:scaleX(1.0221);">Doc Link</div>
<div class="t" style="left:3117.30px;top:354.39px;font-size:29.07px;color:#777777;transform:scaleX(1.1359);">Attachment</div>
<div class="t" style="left:3476.21px;top:354.39px;font-size:29.07px;color:#222222;transform:scaleX(1.0437);">Export</div>
<div class="t" style="left:2181.50px;top:440.72px;font-size:25.73px;color:#777777;transform:scaleX(1.0513);">Printable Format</div>
<div class="t" style="left:2183.60px;top:500.91px;font-size:32.00px;color:#222222;transform:scaleX(1.1184);">test3</div>
<div class="t" style="left:2850.63px;top:658.18px;font-size:29.80px;color:#ffffff;-webkit-text-stroke:1.2px #fff;word-spacing:5px;transform:scaleX(0.8367);">EXPORT AS PDF</div>
<div class="t" style="left:2115.71px;top:611.98px;font-size:25.29px;color:#222222;transform:rotate(90deg) scaleX(0.9173);">Columns</div>
<div class="t" style="left:2115.71px;top:780.90px;font-size:25.29px;color:#222222;transform:rotate(90deg) scaleX(0.8991);">Filters</div>
</body></html>
